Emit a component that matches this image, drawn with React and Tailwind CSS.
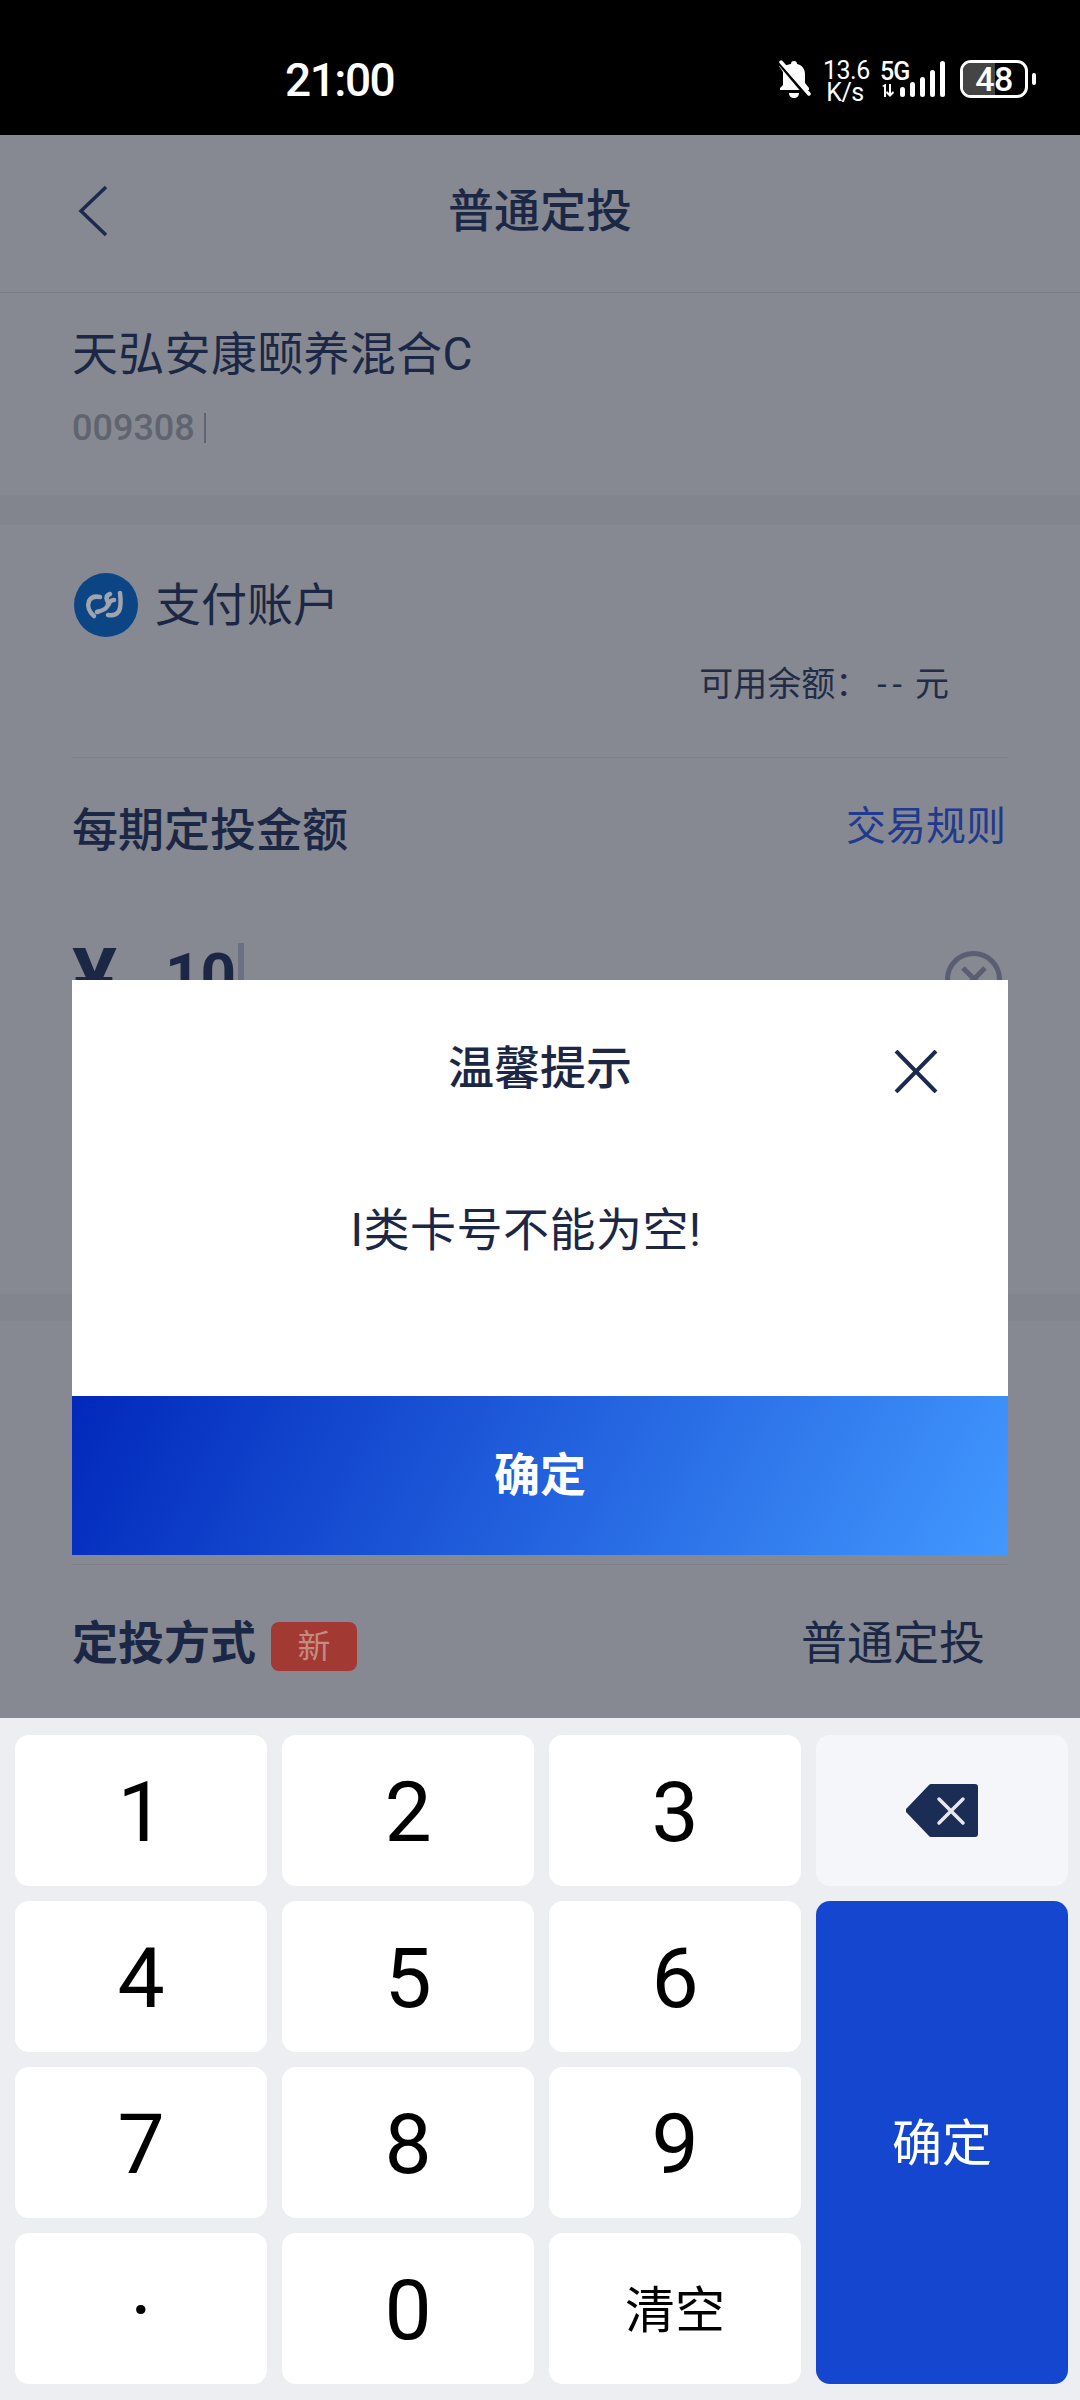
import React from 'react';

const ink = 'text-[#1b2745]';

function StatusBar() {
  return (
    <div className="h-[135px] bg-black flex items-start pt-[60px] text-white">
      <div className="ml-[285px] w-[110px] text-[46px] leading-[40px] font-medium tracking-[-1.5px]">21:00</div>
      <svg className="ml-[382px] w-[34px] h-[38px]" viewBox="0 0 34 38" fill="#fff">
        <path d="M17 1c2 0 3 1 3 3 5 1 8 5 8 10v9l4 5v2H3v-2l3-3V12l-4-6L5 3l3 3c2-1 4-2 6-2 0-2 1-3 3-3z" />
        <path d="M3 3l26 31" stroke="#000" strokeWidth="5" />
        <path d="M4 2l28 32" stroke="#fff" strokeWidth="3.5" strokeLinecap="round" />
        <path d="M12 33h10c0 3-2 5-5 5s-5-2-5-5z" />
      </svg>
      <div className="ml-[12px] w-[44px] text-center text-[25px] leading-[22px] tracking-[-0.5px]">
        <div>13.6</div>
        <div>K/s</div>
      </div>
      <div className="ml-[13px] relative w-[66px] h-[40px]">
        <div className="absolute left-0 top-[2px] text-[25px] leading-[20px] font-medium tracking-[-1px]">5G</div>
        <svg className="absolute left-0 top-0 w-[66px] h-[40px]" viewBox="0 0 66 40" fill="#fff">
          <path d="M2 26l3-2h1v13H4V27zM9 24h2v9l2-2 1 2-4 4-4-4 1-2 2 2z" />
          <rect x="20" y="27" width="5" height="10" rx="2.5" />
          <rect x="30" y="22" width="5" height="15" rx="2.5" />
          <rect x="40" y="17" width="5" height="20" rx="2.5" />
          <rect x="50" y="10" width="5" height="27" rx="2.5" />
          <rect x="60" y="1" width="5" height="36" rx="2.5" />
        </svg>
      </div>
      <div className="ml-[14px] relative w-[68px] h-[38px] rounded-[11px] border-[3px] border-white overflow-hidden flex items-center justify-center">
        <div className="absolute left-0 top-0 bottom-0 w-[32px] bg-[#454545]" />
        <span className="relative text-[34px] leading-none font-medium tracking-[-0.5px]">48</span>
      </div>
      <div className="ml-[4px] mt-[13px] w-[4px] h-[12px] rounded-full bg-white" />
    </div>
  );
}

function Key({ children, className = '' }) {
  return (
    <div className={`bg-white rounded-[14px] flex items-center justify-center text-black pt-[5px] ${className}`}>
      {children}
    </div>
  );
}

function NumberPad() {
  const digits = ['1', '2', '3'];
  return (
    <div className="h-[682px] bg-[#eceef2] pl-[15px] pt-[17px]">
      <div className="grid grid-cols-[repeat(4,252px)] auto-rows-[151px] gap-x-[15px] gap-y-[15px] text-[84px]">
        {digits.map(d => <Key key={d}>{d}</Key>)}
        <div className="bg-[#f5f6f9] rounded-[14px] flex items-center justify-center">
          <svg className="w-[72px] h-[53px]" viewBox="0 0 72 53">
            <path d="M1 24L23 1a3 3 0 0 1 2-1h44a3 3 0 0 1 3 3v47a3 3 0 0 1-3 3H25a3 3 0 0 1-2-1L1 29a3 3 0 0 1 0-5z" fill="#1b2c55" />
            <path d="M33 15l24 24M57 15L33 39" stroke="#e6e8ee" strokeWidth="3.5" strokeLinecap="round" />
          </svg>
        </div>
        <Key>4</Key>
        <Key>5</Key>
        <Key>6</Key>
        <div className="row-span-3 bg-[#1446cf] rounded-[14px] flex items-center justify-center text-white text-[50px]">
          <span className="mt-[3px]">确定</span>
        </div>
        <Key>7</Key>
        <Key>8</Key>
        <Key>9</Key>
        <Key>·</Key>
        <Key>0</Key>
        <Key className="text-[50px]">清空</Key>
      </div>
    </div>
  );
}

function PageBody() {
  return (
    <div className={`h-[1583px] overflow-hidden bg-[#868991] ${ink}`}>
      <div className="h-[158px] border-b border-[#7b7e87] grid grid-cols-[1fr_auto_1fr] items-center pb-[5px] px-[72px]">
        <svg className="w-[30px] h-[52px] ml-[6px]" viewBox="0 0 30 52" fill="none">
          <path d="M28 2L3 26l25 24" stroke="#1b2a4e" strokeWidth="3.5" />
        </svg>
        <div className="text-[46px] leading-[60px] font-medium">普通定投</div>
        <div />
      </div>

      <div className="h-[202px] px-[72px] pt-[31px]">
        <div className="text-[46px] leading-[60px] tracking-[0.3px]">天弘安康颐养混合C</div>
        <div className="mt-[24px] flex items-center text-[36px] leading-[40px] font-medium text-[#5f6470]">
          009308
          <span className="ml-[9px] w-[2px] h-[30px] bg-[#5f6470]" />
        </div>
      </div>

      <div className="h-[30px] bg-[#82858d]" />

      <div className="px-[72px]">
        <div className="pt-[48px] flex items-center">
          <svg className="ml-[2px] w-[64px] h-[64px]" viewBox="0 0 64 64">
            <circle cx="32" cy="32" r="32" fill="#0b4584" />
            <g fill="none" stroke="#a0a5ad" strokeWidth="4.5" strokeLinecap="round">
              <path d="M20 43c-5-4-7-10-5-15 2-4 6-5 11-4" />
              <path d="M36 21c-3 1-4 3-3 6 2 3 1 6-1 8-2 2-6 3-9 4" />
              <path d="M34 42c5 1 9-1 11-4 2-4 2-10 1-18" />
              <path d="M40 27c-3 0-5 2-5 4" />
            </g>
          </svg>
          <div className="ml-[17px] text-[46px] leading-[60px]">支付账户</div>
        </div>
        <div className="mt-[27px] flex justify-end pr-[59px] text-[34px] leading-[40px] text-[#222c45]">
          可用余额：
          <span className="tracking-[6px] mr-[7px] ml-[8px]">--</span>
          元
        </div>
        <div className="mt-[53px] border-b border-[#7d8089]" />
        <div className="mt-[42px] flex items-center justify-between">
          <div className="text-[46px] leading-[60px] font-medium">每期定投金额</div>
          <div className="text-[40px] leading-[60px] text-[#1f3a8f] pr-[2px] -mt-[6px]">交易规则</div>
        </div>
        <div className="mt-[76px] h-[80px] flex items-center">
          <span className="text-[84px] leading-[80px] font-bold mt-[8px]">¥</span>
          <span className="ml-[48px] text-[62px] leading-[80px] font-bold">10</span>
          <span className="ml-[2px] mt-[4px] w-[6px] h-[70px] bg-[#6c7084]" />
          <span className="ml-auto mr-[6px] mt-[6px] w-[57px] h-[57px] rounded-full border-[5px] border-[#5a5e72] flex items-center justify-center">
            <svg className="w-[30px] h-[30px]" viewBox="0 0 30 30" fill="none">
              <path d="M4 4l11 11 11-11M15 15L4 26M15 15l11 11" stroke="#5a5e72" strokeWidth="5" />
            </svg>
          </span>
        </div>
      </div>

      <div className="mt-[278px] h-[27px] bg-[#82858d]" />
      <div className="mx-[72px] h-[244px] border-b border-[#7d8089]" />

      <div className="mt-[48px] px-[72px] flex items-center justify-between">
        <div className="flex items-center">
          <div className="text-[46px] leading-[60px] font-bold">定投方式</div>
          <div className="ml-[15px] mt-[6px] w-[86px] h-[49px] rounded-[8px] bg-[#a23a33] text-[#c28c82] text-[33px] leading-[49px] text-center">新</div>
        </div>
        <div className="text-[46px] leading-[60px] pr-[23px]">普通定投</div>
      </div>
    </div>
  );
}

function AlertDialog() {
  return (
    <div className="absolute left-[72px] top-[980px] w-[936px] h-[575px] bg-white flex flex-col">
      <div className={`pt-[58px] text-center text-[46px] leading-[60px] font-medium ${ink}`}>温馨提示</div>
      <svg className="absolute left-[822px] top-[70px] w-[44px] h-[43px]" viewBox="0 0 44 43" fill="none">
        <path d="M2 1l40 41M42 1L2 42" stroke="#1b2a4e" strokeWidth="4" />
      </svg>
      <div className={`mt-[102px] pr-[28px] text-center text-[46px] leading-[60px] tracking-[0.5px] ${ink}`}>I类卡号不能为空!</div>
      <div className="mt-auto h-[159px] bg-[linear-gradient(118deg,#0128bb,#4298ff)] flex items-center justify-center text-white text-[46px] font-bold">
        确定
      </div>
    </div>
  );
}

export default function App() {
  return (
    <div className="relative w-[1080px] h-[2400px] overflow-hidden font-[Roboto,'Noto_Sans_CJK_SC',sans-serif]">
      <StatusBar />
      <PageBody />
      <NumberPad />
      <AlertDialog />
    </div>
  );
}
